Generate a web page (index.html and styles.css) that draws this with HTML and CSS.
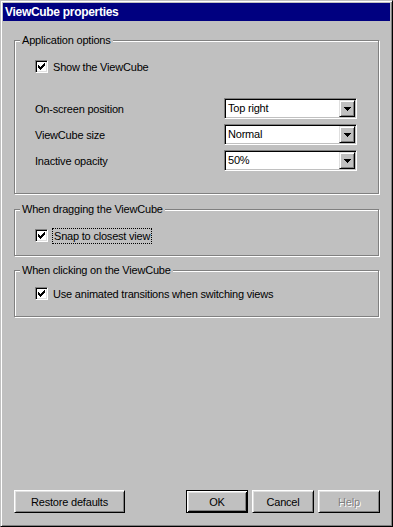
FILE: index.html
```html
<!DOCTYPE html>
<html>
<head>
    <meta charset="utf-8">
    <title>ViewCube properties</title>
    <link rel="stylesheet" href="styles.css">
</head>
<body>
    <div class="window">
        <div class="titlebar">ViewCube properties</div>

        <div class="content">
            <div class="group group-app">
                <div class="group-title">Application options</div>
                <label class="check">
                    <span class="box"><svg width="7" height="7" viewBox="0 0 7 7"><path d="M0 2h1v1h1v1h1v-1h1v-1h1v-1h1v-1h1v3h-1v1h-1v1h-1v1h-1v1h-1v-1h-1v-1h-1v-1h-1z" fill="#000"/></svg></span>
                    <span>Show the ViewCube</span>
                </label>

                <div class="fields">
                    <span class="field-label">On-screen position</span>
                    <div class="combo">
                        <span class="combo-value">Top right</span>
                        <span class="combo-btn"><svg width="7" height="4" viewBox="0 0 7 4"><path d="M0 0h7v1h-1v1h-1v1h-1v1h-1v-1h-1v-1h-1v-1h-1z" fill="#000"/></svg></span>
                    </div>

                    <span class="field-label">ViewCube size</span>
                    <div class="combo">
                        <span class="combo-value">Normal</span>
                        <span class="combo-btn"><svg width="7" height="4" viewBox="0 0 7 4"><path d="M0 0h7v1h-1v1h-1v1h-1v1h-1v-1h-1v-1h-1v-1h-1z" fill="#000"/></svg></span>
                    </div>

                    <span class="field-label">Inactive opacity</span>
                    <div class="combo">
                        <span class="combo-value">50%</span>
                        <span class="combo-btn"><svg width="7" height="4" viewBox="0 0 7 4"><path d="M0 0h7v1h-1v1h-1v1h-1v1h-1v-1h-1v-1h-1v-1h-1z" fill="#000"/></svg></span>
                    </div>
                </div>
            </div>

            <div class="group group-drag">
                <div class="group-title">When dragging the ViewCube</div>
                <label class="check">
                    <span class="box"><svg width="7" height="7" viewBox="0 0 7 7"><path d="M0 2h1v1h1v1h1v-1h1v-1h1v-1h1v-1h1v3h-1v1h-1v1h-1v1h-1v1h-1v-1h-1v-1h-1v-1h-1z" fill="#000"/></svg></span>
                    <span class="focus">Snap to closest view</span>
                </label>
            </div>

            <div class="group group-click">
                <div class="group-title">When clicking on the ViewCube</div>
                <label class="check">
                    <span class="box"><svg width="7" height="7" viewBox="0 0 7 7"><path d="M0 2h1v1h1v1h1v-1h1v-1h1v-1h1v-1h1v3h-1v1h-1v1h-1v1h-1v1h-1v-1h-1v-1h-1v-1h-1z" fill="#000"/></svg></span>
                    <span>Use animated transitions when switching views</span>
                </label>
            </div>
        </div>

        <div class="buttons">
            <button class="btn btn-wide">Restore defaults</button>
            <div class="btn-group">
                <button class="btn btn-default">OK</button>
                <button class="btn">Cancel</button>
                <button class="btn btn-disabled" disabled>Help</button>
            </div>
        </div>
    </div>
</body>
</html>
```

FILE: styles.css
```css
html, body {
    margin: 0;
    padding: 0;
    background-color: #c0c0c0;
}
body {
    font-family: "Liberation Sans", Arial, sans-serif;
    font-size: 11px;
    letter-spacing: -0.2px;
    color: #000;
}
.window {
    width: 393px;
    height: 527px;
    box-sizing: border-box;
    display: flex;
    flex-direction: column;
    padding: 2px;
    background-color: #c0c0c0;
    border: 1px solid;
    border-color: #c0c0c0 #000 #000 #c0c0c0;
    box-shadow: inset 1px 1px #fff, inset -1px -1px #808080;
}
.titlebar {
    height: 18px;
    line-height: 18px;
    padding-left: 2px;
    background-color: #000080;
    color: #fff;
    font-weight: bold;
    font-size: 12px;
    letter-spacing: -0.3px;
}
.content {
    padding: 0 11px;
}
.group {
    border: 1px solid #808080;
    box-shadow: inset 1px 1px #fff, 1px 1px #fff;
    padding: 0 20px;
    margin-top: 15px;
}
.group-app {
    margin-top: 19px;
    padding-bottom: 22px;
}
.group-drag {
    padding-bottom: 13px;
}
.group-click {
    margin-top: 14px;
    padding-bottom: 16px;
}
.group-click .check {
    margin-top: 10px;
}
.group-title {
    width: fit-content;
    margin: -7px 0 0 -15px;
    padding: 0 2px;
    line-height: 13px;
    background-color: #c0c0c0;
}
.check {
    display: flex;
    align-items: center;
    height: 13px;
    margin-top: 13px;
}
.box {
    width: 13px;
    height: 13px;
    box-sizing: border-box;
    padding: 2px;
    margin-right: 5px;
    background-color: #fff;
    border: 1px solid;
    border-color: #808080 #fff #fff #808080;
    box-shadow: inset 1px 1px #000, inset -1px -1px #dfdfdf;
}
.box svg {
    display: block;
    shape-rendering: crispEdges;
}
.focus {
    outline: 1px dotted #000;
    padding: 1px 1px;
}
.fields {
    display: grid;
    grid-template-columns: 189px 133px;
    grid-auto-rows: 21px;
    row-gap: 5px;
    align-items: center;
    margin-top: 25px;
}
.combo {
    height: 21px;
    box-sizing: border-box;
    display: flex;
    padding: 1px;
    background-color: #fff;
    border: 1px solid;
    border-color: #808080 #fff #fff #808080;
    box-shadow: inset 1px 1px #000, inset -1px -1px #c0c0c0;
}
.combo-value {
    flex: 1;
    padding-left: 2px;
    line-height: 17px;
}
.combo-btn {
    width: 16px;
    height: 17px;
    box-sizing: border-box;
    display: flex;
    align-items: center;
    justify-content: center;
    background-color: #c0c0c0;
    border: 1px solid;
    border-color: #dfdfdf #000 #000 #dfdfdf;
    box-shadow: inset 1px 1px #fff, inset -1px -1px #808080;
}
.combo-btn svg {
    display: block;
    shape-rendering: crispEdges;
}
.buttons {
    margin-top: auto;
    display: flex;
    padding: 0 10px 11px 11px;
}
.btn-group {
    display: flex;
    gap: 4px;
    margin-left: auto;
}
.btn {
    width: 62px;
    height: 23px;
    padding: 0;
    font-family: "Liberation Sans", Arial, sans-serif;
    font-size: 11px;
    letter-spacing: -0.2px;
    color: #000;
    background-color: #c0c0c0;
    border: 1px solid;
    border-color: #fff #000 #000 #fff;
    box-shadow: inset 1px 1px #dfdfdf, inset -1px -1px #808080;
}
.btn-wide {
    width: 111px;
}
.btn-default {
    border-color: #000;
    box-shadow: inset 1px 1px #fff, inset -1px -1px #000, inset 2px 2px #dfdfdf, inset -2px -2px #808080;
}
.btn-disabled {
    color: #808080;
    text-shadow: 1px 1px 0 #fff;
}
```
